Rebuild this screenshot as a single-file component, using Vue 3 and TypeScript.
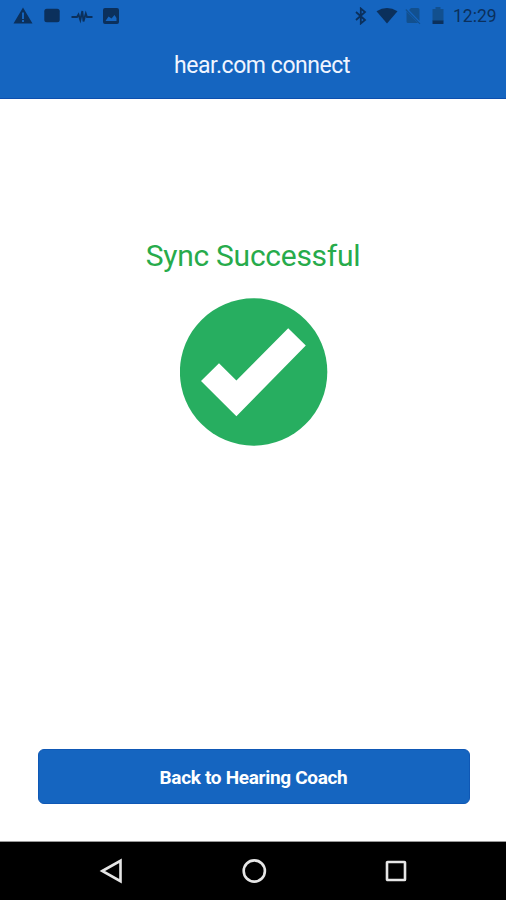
<script setup lang="ts">
import { ref } from 'vue'

const title = ref('hear.com connect')
const clock = ref('12:29')
const message = ref('Sync Successful')
</script>

<template>
  <div class="screen">
    <header class="top">
      <div class="status-bar">
        <div class="status-bar__left">
          <svg width="20" height="18" viewBox="0 0 20 18">
            <path fill-rule="evenodd" d="M10 .5L19.5 16.5H.5ZM9 5.5V12H11V5.5ZM9 13V15H11V13Z" />
          </svg>
          <svg class="status-bar__app" width="16" height="16" viewBox="0 0 16 16">
            <rect x=".3" y=".8" width="15.4" height="13.4" rx="2.5" />
          </svg>
          <svg class="status-bar__pulse" width="22" height="16" viewBox="0 0 22 16">
            <path class="line" d="M.5 9H6L7.5 6.5L9.3 12L11.3 3L12.5 13.5L14.8 5.5L16 9H21.5" />
          </svg>
          <svg class="status-bar__image" width="16" height="16" viewBox="0 0 16 16">
            <path fill-rule="evenodd" d="M2 0H14Q16 0 16 2V14Q16 16 14 16H2Q0 16 0 14V2Q0 0 2 0ZM2.5 13H13.5V10L11.5 7L8.5 10.5L5.5 8.5Z" />
          </svg>
        </div>
        <div class="status-bar__right">
          <svg width="12" height="18" viewBox="0 0 12 18">
            <path class="line" d="M1 5L10 13L5.8 16.5V1.5L10 5L1 13" />
          </svg>
          <svg class="status-bar__wifi" width="22" height="16" viewBox="0 0 22 16">
            <path d="M11 15.5L.5 3.2Q11-3 21.5 3.2Z" />
          </svg>
          <svg class="status-bar__sim" width="16" height="18" viewBox="0 0 16 18">
            <path class="faint" d="M6 1H13Q14.5 1 14.5 2.5V14L4 3ZM1.5 4.5L13 16H3Q1.5 16 1.5 14.5Z" />
            <path class="sim-slash" d="M.8 2.5L15 16.8" />
          </svg>
          <svg class="status-bar__battery" width="12" height="18" viewBox="0 0 12 18">
            <path class="faint" d="M3.5 0H8.5V2H11.5V14H.5V2H3.5Z" />
            <path d="M.5 13.5H11.5V16.5Q11.5 17 11 17H1Q.5 17 .5 16.5Z" />
          </svg>
          <span class="clock">{{ clock }}</span>
        </div>
      </div>
      <h1 class="title">{{ title }}</h1>
    </header>

    <main class="content">
      <p class="message">{{ message }}</p>
      <svg class="check" width="148" height="148" viewBox="0 0 148 148">
        <circle cx="73.6" cy="74" r="73.7" fill="#27ae60" />
        <path d="M21 83L39 65.3L56.4 82.5L108.2 30.2L125.8 47.5L56.4 118.3Z" fill="#fff" />
      </svg>
      <button class="back-button" type="button">Back to Hearing Coach</button>
    </main>

    <nav class="nav-bar">
      <svg width="26" height="26" viewBox="0 0 26 26">
        <path d="M4.3 13L22.5 2.8V23.2Z" />
      </svg>
      <svg width="26" height="26" viewBox="0 0 26 26">
        <circle cx="13.3" cy="13" r="10.6" />
      </svg>
      <svg width="26" height="26" viewBox="0 0 26 26">
        <rect x="4" y="4" width="18" height="18" rx=".6" />
      </svg>
    </nav>
  </div>
</template>

<style>
body {
  margin: 0;
}
</style>

<style scoped>
.screen {
  display: flex;
  width: 100%;
  height: 900px;
  flex-direction: column;
  background: #fff;
  font-family: Roboto, 'Liberation Sans', sans-serif;
}

.top {
  box-sizing: border-box;
  height: 99px;
  border-bottom: 1px solid #0d4fae;
  background: #1565c0;
}

.status-bar {
  display: flex;
  height: 31px;
  align-items: center;
  justify-content: space-between;
  padding: 0 9px 0 13px;
  fill: #0b305c;
}

.status-bar__left,
.status-bar__right {
  display: flex;
  align-items: center;
}

.status-bar__app {
  margin-left: 11px;
}

.status-bar__pulse {
  margin-left: 11px;
}

.status-bar__image {
  margin-left: 10px;
}

.status-bar__wifi {
  margin-left: 9px;
}

.status-bar__sim {
  margin-left: 7px;
}

.status-bar__battery {
  margin-left: 11px;
}

.line {
  fill: none;
  stroke: #0b305c;
  stroke-width: 1.8;
}

.faint {
  fill: #12508f;
}

.sim-slash {
  fill: none;
  stroke: #12508f;
  stroke-width: 1.1;
}

.clock {
  width: 44px;
  margin-left: 9px;
  color: #0b305c;
  font-size: 17.5px;
  line-height: 20px;
  white-space: nowrap;
}

.title {
  margin: 22px 0 0;
  padding-left: 18px;
  color: #f0f5ff;
  font-size: 23px;
  font-weight: 400;
  letter-spacing: -0.45px;
  line-height: 26px;
  text-align: center;
}

.content {
  display: flex;
  min-height: 0;
  flex: 1;
  flex-direction: column;
  align-items: center;
  padding-left: 1px;
}

.message {
  margin: 139px 1px 0 0;
  color: #27ab4b;
  font-size: 30px;
  letter-spacing: -0.27px;
  line-height: 36px;
}

.check {
  margin-top: 24px;
}

.back-button {
  width: 432px;
  height: 55px;
  margin: auto 0 37px;
  padding: 1px 0 0;
  border: 1px solid #0f58b5;
  border-radius: 6px;
  background: #1565c0;
  color: #fff;
  font-family: inherit;
  font-size: 19px;
  font-weight: 700;
  letter-spacing: -0.32px;
}

.nav-bar {
  display: flex;
  box-sizing: border-box;
  height: 59px;
  align-items: center;
  justify-content: space-between;
  padding: 0 97px 0 98px;
  border-top: 1px solid #999;
  background: #000;
}

.nav-bar svg {
  fill: none;
  stroke: #e6e6e6;
  stroke-width: 2.6;
}
</style>
